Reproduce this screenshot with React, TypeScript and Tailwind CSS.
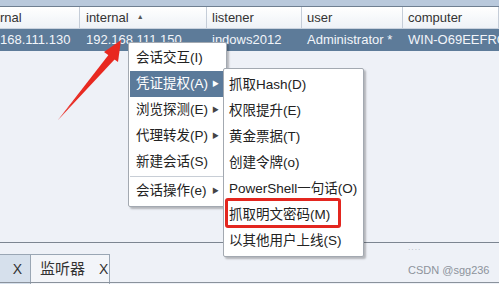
import React from "react";

const cols = [
  { w: "w-[80px]", head: "rnal", cell: "168.111.130", pl: "pl-0" },
  { w: "w-[127px]", head: "internal", cell: "192.168.111.150", pl: "pl-[6px]", sort: true },
  { w: "w-[95px]", head: "listener", cell: "indows2012", pl: "pl-[5px]" },
  { w: "w-[101px]", head: "user", cell: "Administrator *", pl: "pl-[5px]" },
  { w: "w-[96px]", head: "computer", cell: "WIN-O69EEFRC", pl: "pl-[5px]" },
];

const menuA = [
  { t: "会话交互(I)" },
  { t: "凭证提权(A)", sub: true, on: true },
  { t: "浏览探测(E)", sub: true },
  { t: "代理转发(P)", sub: true },
  { t: "新建会话(S)", sep: true },
  { t: "会话操作(e)", sub: true },
];

const menuB = [
  "抓取Hash(D)",
  "权限提升(E)",
  "黄金票据(T)",
  "创建令牌(o)",
  "PowerShell一句话(O)",
  "抓取明文密码(M)",
  "以其他用户上线(S)",
];

export default function App() {
  return (
    <div
      className="relative w-[499px] h-[284px] overflow-hidden bg-[#eef1f7] text-[13px]"
      style={{ fontFamily: '"Liberation Sans", "Noto Sans CJK SC", sans-serif' }}
    >
      {/* top strip */}
      <div className="h-[6px] bg-[#b9c9dc]" />
      <div className="h-[1px] bg-[#6f7f91]" />

      {/* table header */}
      <div className="flex h-[22px] bg-gradient-to-b from-white to-[#eef2f7] border-b border-[#c9d2de]">
        {cols.map((c, i) => (
          <div
            key={i}
            className={`${c.w} ${c.pl} shrink-0 flex items-center gap-[8px] text-[#333] border-r border-[#c5cdd8] whitespace-nowrap overflow-hidden`}
          >
            {c.head}
            {c.sort && <span className="text-[7px] text-[#555]">▲</span>}
          </div>
        ))}
      </div>

      {/* selected row */}
      <div className="flex h-[22px] bg-[#5d7b99] text-[#f2f5f9]">
        {cols.map((c, i) => (
          <div key={i} className={`${c.w} ${c.pl} shrink-0 flex items-center whitespace-nowrap overflow-hidden`}>
            {c.cell}
          </div>
        ))}
      </div>

      <div className="h-[191px]" />

      {/* bottom divider + tabs */}
      <div className="h-[1px] bg-[#7c8591]" />
      <div className="relative h-[41px]">
        <div className="absolute left-[0px] top-[11px] flex h-[30px]">
          <div className="w-[31px] flex items-center justify-end pr-[8px] bg-[#d6e0ec] border-r border-t border-[#9aa6b4] text-[#333] text-[14px]">
            X
          </div>
          <div className="w-[79px] flex items-center gap-[14px] pl-[9px] bg-[#f3f5f9] border-r border-t border-[#9aa6b4] text-[#333]">
            <span className="text-[15px]">监听器</span>
            <span className="text-[14px]">X</span>
          </div>
        </div>
        <div className="absolute left-[408px] top-[2px] text-[7px] text-[#a5abb5] tracking-[1px]">····</div>
        <div className="absolute left-[408px] top-[19px] text-[11px] text-[#8d939c]">CSDN @sgg236</div>
        <div className="absolute left-0 right-0 bottom-[1px] h-[1px] bg-[#8a929c]" />
      </div>

      {/* context menu 1 */}
      <div className="absolute left-[128px] top-[42px] w-[99px] bg-white border border-[#a3a9b1] shadow-[2px_2px_2px_rgba(0,0,0,0.25)] py-[2px] rounded-[2px]">
        {menuA.map((m, i) => (
          <div key={i}>
            <div
              className={`h-[26px] mx-[1px] flex items-center justify-between pl-[6px] pr-[6px] text-[13.5px] ${
                m.on ? "bg-[#5b7a9a] text-white" : "text-[#222]"
              }`}
            >
              <span>{m.t}</span>
              {m.sub && <span className={`text-[7px] ${m.on ? "text-white" : "text-[#444]"}`}>▶</span>}
            </div>
            {m.sep && <div className="h-[1px] mx-[1px] my-[1px] bg-[#c8ced6]" />}
          </div>
        ))}
      </div>

      {/* context menu 2 */}
      <div className="absolute left-[223px] top-[68px] w-[141px] bg-white border border-[#a3a9b1] shadow-[2px_2px_2px_rgba(0,0,0,0.25)] pt-[3px] pb-[2px] rounded-[2px]">
        {menuB.map((t, i) => (
          <div key={i} className="h-[26px] flex items-center pl-[5px] text-[13.5px] text-[#222] whitespace-nowrap">
            {t}
          </div>
        ))}
      </div>

      {/* red highlight box */}
      <div className="absolute left-[225px] top-[198px] w-[116px] h-[30px] border-[3px] border-[#e3261f] rounded-[3px]" />

      {/* red arrow */}
      <svg className="absolute left-0 top-0" width="499" height="284" viewBox="0 0 499 284">
        <path d="M58 120 L111 56 L115 59 Z" fill="#e8281f" />
        <path d="M58 120 L113 55 L110 53 Z" fill="#e8281f" />
        <polygon points="121,40 104,52 118,62" fill="#e8281f" />
      </svg>
    </div>
  );
}
